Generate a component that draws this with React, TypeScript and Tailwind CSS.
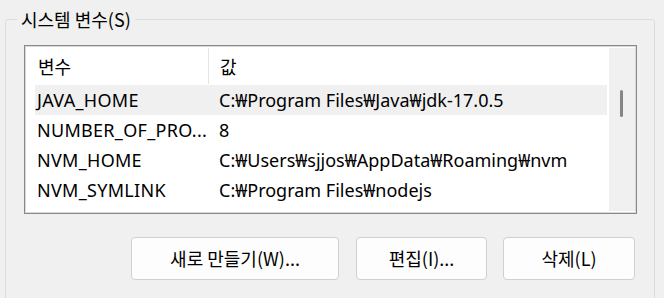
import React from "react";

const rows: [string, string][] = [
  ["JAVA_HOME", "C:₩Program Files₩Java₩jdk-17.0.5"],
  ["NUMBER_OF_PRO...", "8"],
  ["NVM_HOME", "C:₩Users₩sjjos₩AppData₩Roaming₩nvm"],
  ["NVM_SYMLINK", "C:₩Program Files₩nodejs"],
];

export default function App() {
  return (
    <div className="w-[664px] h-[298px] overflow-hidden bg-[#f0f0f0] text-black font-['Noto_Sans','Noto_Sans_CJK_KR',sans-serif] text-[18px]">
      <div className="pt-[19px] pl-[5px]">
        <div className="relative w-[650px] h-[300px] border border-[#dcdcdc] rounded-[3px]">
          <span className="absolute -top-[13px] left-[11px] px-[4px] bg-[#f0f0f0] leading-[24px] font-['Noto_Sans_CJK_KR','Noto_Sans',sans-serif]">
            시스템 변수(S)
          </span>
          <div className="ml-[18px] mt-[25px] w-[613px] h-[169px] border border-[#868a90] bg-white">
            <div className="w-full h-full border border-[#d9d9d9] flex overflow-hidden">
              <div className="w-[583px] h-full overflow-hidden">
                <div className="h-[38px] flex items-center">
                  <div className="w-[182px] pl-[12px] font-['Noto_Sans_CJK_KR',sans-serif]">변수</div>
                  <div className="w-px h-[36px] bg-[#e5e5e5]" />
                  <div className="pl-[11px] font-['Noto_Sans_CJK_KR',sans-serif]">값</div>
                </div>
                {rows.map(([k, v], i) => (
                  <div
                    key={k}
                    className={`ml-[9px] w-[572px] h-[30px] flex items-center whitespace-nowrap ${i === 0 ? "bg-[#f0f0f0]" : ""}`}
                  >
                    <div className="w-[184px] pl-[2px] tracking-[0.3px]">{k}</div>
                    <div>{v}</div>
                  </div>
                ))}
              </div>
              <div className="w-[26px] h-full py-[1px] pb-[0px]">
                <div className="relative w-full h-[163px] bg-[#f0f0f0]">
                  <div className="absolute left-[11px] top-[42px] w-[3px] h-[27px] rounded-full bg-[#858585]" />
                </div>
              </div>
            </div>
          </div>
          <div className="flex mt-[23px] ml-[125px]">
            <button className="w-[208px] h-[43px] rounded-[4px] border border-[#d0d0d0] bg-[#fdfdfd] font-['Noto_Sans_CJK_KR','Noto_Sans',sans-serif]">
              새로 만들기(W)...
            </button>
            <button className="ml-[17px] w-[131px] h-[43px] rounded-[4px] border border-[#d0d0d0] bg-[#fdfdfd] font-['Noto_Sans_CJK_KR','Noto_Sans',sans-serif]">
              편집(I)...
            </button>
            <button className="ml-[16px] w-[132px] h-[43px] rounded-[4px] border border-[#d0d0d0] bg-[#fdfdfd] font-['Noto_Sans_CJK_KR','Noto_Sans',sans-serif]">
              삭제(L)
            </button>
          </div>
        </div>
      </div>
    </div>
  );
}
